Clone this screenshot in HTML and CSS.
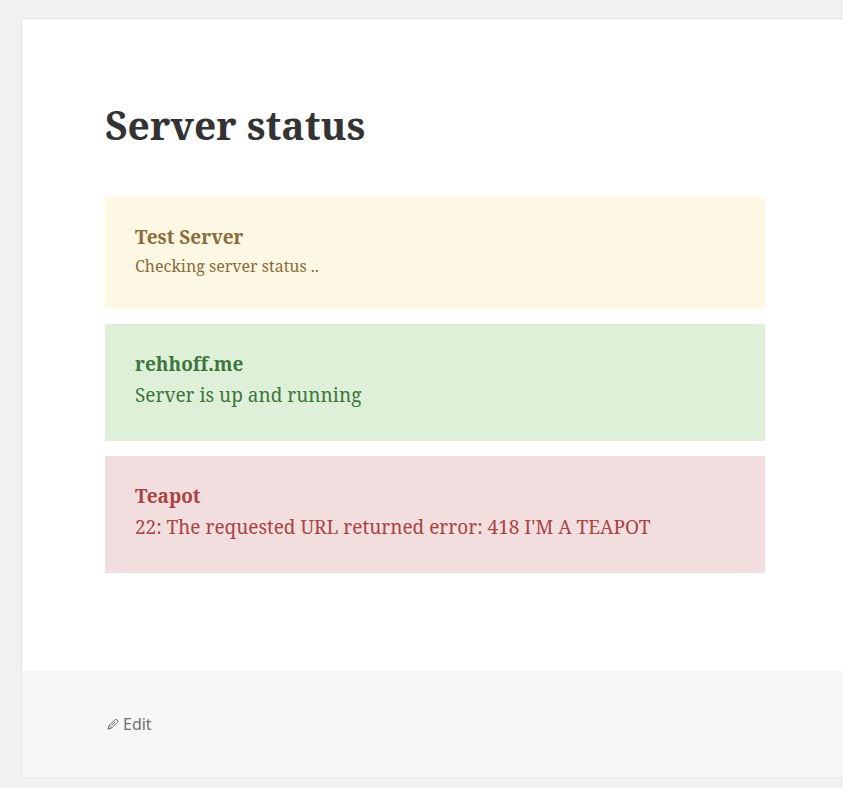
FILE: index.html
```html
<!DOCTYPE html>
<html lang="en">
<head>
<meta charset="utf-8">
<title>Server status</title>
<link rel="stylesheet" href="styles.css">
</head>
<body>
<article class="page">
  <div class="content">
    <h1 class="title">Server status</h1>
    <section class="status checking"><h2>Test Server</h2><p>Checking server status ..</p></section>
    <section class="status up"><h2>rehhoff.me</h2><p>Server is up and running</p></section>
    <section class="status down"><h2>Teapot</h2><p>22: The requested URL returned error: 418 I'M A TEAPOT</p></section>
  </div>
  <footer class="footer">
    <svg class="pencil" viewBox="0 0 12 12" width="12" height="12"><path d="M1 11L2 7.500L7.500 2Q8.800 .8 10.200 2T10.100 4.500L4.600 10zM2 7.500L4.600 10M4.300 7.700L8.200 3.800"/><path class="tip" d="M.6 11.400L1.300 9.200L2.800 10.700z"/></svg>
    <span>Edit</span>
  </footer>
</article>
</body>
</html>
```
FILE: styles.css
```css
body {
  margin: 0;
  padding: 19px 0 11px 22px;
  background: #f1f1f1;
  font-family: "Noto Serif", "Droid Serif", "DejaVu Serif", serif;
}
.page {
  height: 758px;
  background: #fff;
  box-shadow: 0 0 1px rgba(0, 0, 0, 0.28);
  display: flex;
  flex-direction: column;
}
.content {
  box-sizing: border-box;
  height: 652px;
  padding: 82px 0 0 83px;
}
.title {
  margin: 0 0 48px;
  color: #333;
  font-size: 39px;
  line-height: 48px;
}
.status {
  box-sizing: border-box;
  width: 660px;
  height: 117px;
  margin-bottom: 15px;
  padding: 25px 30px;
  font-variant-ligatures: none;
}
.status h2,
.status p {
  margin: 0;
  font-size: 19px;
  line-height: 31px;
  white-space: nowrap;
}
.checking {
  height: 112px;
  background: #fcf8e3;
  color: #8a6d3b;
}
.checking p {
  font-size: 16px;
  line-height: 27px;
}
.up {
  background: #dff0d8;
  color: #3c763d;
}
.down {
  background: #f2dede;
  color: #a94442;
}
.footer {
  flex: 1;
  display: flex;
  align-items: center;
  padding-left: 85px;
  gap: 4px;
  background: #f7f7f7;
  color: #707070;
  font: 16px/24px "Noto Sans", sans-serif;
}
.pencil {
  fill: none;
  stroke: #707070;
  stroke-width: 1;
}
.tip {
  fill: #707070;
  stroke: none;
}
```
